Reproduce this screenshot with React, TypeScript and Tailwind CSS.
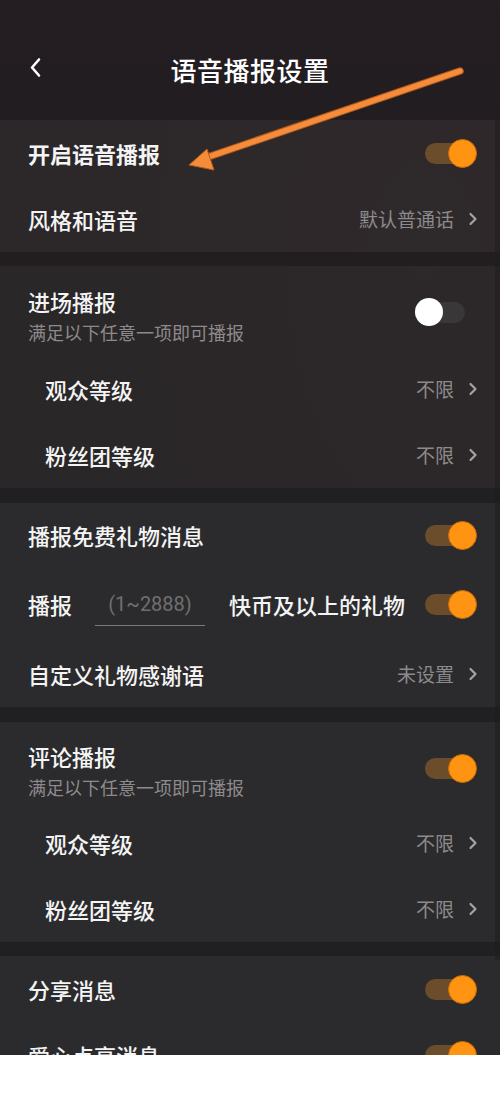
import React from "react";

const FONT = { fontFamily: '"Noto Sans CJK SC", "Noto Sans", sans-serif' };

function Toggle({ on }: { on: boolean }) {
  if (on) {
    return (
      <div className="relative w-[52px] h-[28px] flex items-center shrink-0">
        <div className="absolute left-0 right-[4px] h-[21px] rounded-full bg-[#6b4c2b]" />
        <div className="absolute right-0 w-[29px] h-[29px] rounded-full bg-[#ff9412] border border-[#c76a08]" />
      </div>
    );
  }
  return (
    <div className="relative w-[52px] h-[28px] flex items-center shrink-0 mr-[10px]">
      <div className="absolute left-[6px] right-[2px] h-[21px] rounded-full bg-[#3a3739]" />
      <div className="absolute left-0 w-[28px] h-[28px] rounded-full bg-white" />
    </div>
  );
}

function Chevron() {
  return (
    <svg width="10" height="14" viewBox="0 0 10 14" className="ml-[14px]">
      <path d="M2.5 2 L7.5 7 L2.5 12" fill="none" stroke="#a3a3a3" strokeWidth="2.2" strokeLinecap="round" strokeLinejoin="round" />
    </svg>
  );
}

function ValueRow({ label, value, indent, h = 66, bold }: { label: string; value: string; indent?: boolean; h?: number; bold?: boolean }) {
  return (
    <div className={`flex items-center justify-between pr-[22px] ${indent ? "pl-[45px]" : "pl-[28px]"}`} style={{ height: h }}>
      <span className={`text-[22px] text-[#f4f4f4] ${bold ? "font-bold" : "font-medium"}`}>{label}</span>
      <div className="flex items-center">
        <span className="text-[19px] text-[#8c8a8b]">{value}</span>
        <Chevron />
      </div>
    </div>
  );
}

function ToggleRow({ label, on, h = 66, bold }: { label: string; on: boolean; h?: number; bold?: boolean }) {
  return (
    <div className="flex items-center justify-between pl-[28px] pr-[23px]" style={{ height: h }}>
      <span className={`text-[22px] text-[#f4f4f4] ${bold ? "font-bold" : "font-medium"}`}>{label}</span>
      <Toggle on={on} />
    </div>
  );
}

function HeaderToggle({ title, on, h, pt, tm }: { title: string; on: boolean; h: number; pt: number; tm: number }) {
  return (
    <div className="flex justify-between pl-[28px] pr-[23px]" style={{ height: h, paddingTop: pt }}>
      <div className="flex flex-col">
        <span className="text-[22px] leading-[32px] font-medium text-[#f4f4f4]">{title}</span>
        <span className="text-[18px] leading-[26px] mt-[2px] text-[#8e8a8c]">满足以下任意一项即可播报</span>
      </div>
      <div style={{ marginTop: tm }}>
        <Toggle on={on} />
      </div>
    </div>
  );
}

export default function App() {
  return (
    <div className="w-[500px] h-[1111px] bg-white relative overflow-hidden" style={FONT}>
      <div className="h-[1055px] overflow-hidden bg-[#201e20] relative">
        {/* reddish tint */}
        <div className="absolute inset-0 bg-[radial-gradient(ellipse_at_85%_25%,rgba(120,65,65,0.32),transparent_60%)] pointer-events-none" />
        <div className="relative">
          {/* header */}
          <div className="h-[120px] bg-gradient-to-b from-[#241e22] to-[#221d21] relative flex items-center justify-center pt-[18px]">
            <svg width="14" height="22" viewBox="0 0 14 22" className="absolute left-[29px] top-[57px]">
              <path d="M10 2.5 L3 10.5 L10 18.5" fill="none" stroke="#ffffff" strokeWidth="2.6" strokeLinecap="round" strokeLinejoin="round" />
            </svg>
            <span className="text-[26px] font-medium text-white tracking-[0.5px]">语音播报设置</span>
          </div>

          {/* section 1 */}
          <div className="bg-[#2e292b]/90">
            <ToggleRow label="开启语音播报" on bold />
            <ValueRow label="风格和语音" value="默认普通话" />
          </div>
          <div className="h-[14px] bg-[#221e20]" />

          {/* section 2 */}
          <div className="bg-[#2b2829]/90">
            <HeaderToggle title="进场播报" on={false} h={90} pt={19} tm={13} />
            <ValueRow label="观众等级" value="不限" indent />
            <ValueRow label="粉丝团等级" value="不限" indent />
          </div>
          <div className="h-[15px] bg-[#202022]" />

          {/* section 3 */}
          <div className="bg-[#2b2b2d]">
            <ToggleRow label="播报免费礼物消息" on h={64} />
            <div className="flex items-center pl-[28px] pr-[23px] h-[74px]">
              <span className="text-[22px] font-medium text-[#f4f4f4] w-[67px]">播报</span>
              <div className="w-[110px] h-[44px] border-b border-[#7a7a7a] flex items-center justify-center mr-[24px]">
                <span className="text-[20px] text-[#6f6f71]" style={{ fontFamily: 'Roboto, "Noto Sans", sans-serif' }}>(1~2888)</span>
              </div>
              <span className="text-[22px] font-medium text-[#f4f4f4] flex-1">快币及以上的礼物</span>
              <Toggle on />
            </div>
            <ValueRow label="自定义礼物感谢语" value="未设置" h={66} />
          </div>
          <div className="h-[15px] bg-[#202022]" />

          {/* section 4 */}
          <div className="bg-[#2b2b2d]">
            <HeaderToggle title="评论播报" on h={88} pt={18} tm={14} />
            <ValueRow label="观众等级" value="不限" indent />
            <ValueRow label="粉丝团等级" value="不限" indent />
          </div>
          <div className="h-[14px] bg-[#202022]" />

          {/* section 5 */}
          <div className="bg-[#2b2b2d]">
            <ToggleRow label="分享消息" on />
            <ToggleRow label="爱心点亮消息" on />
          </div>
        </div>

        {/* right edge strip */}
        <div className="absolute right-0 top-[105px] w-[5px] h-[855px] bg-[#1f1d1f]/60" />

        {/* annotation arrow */}
        <svg width="500" height="200" viewBox="0 0 500 200" className="absolute left-0 top-0 pointer-events-none">
          <line x1="460" y1="71" x2="205" y2="158" stroke="#b55a1a" strokeWidth="7.5" strokeLinecap="round" />
          <line x1="460" y1="71" x2="205" y2="158" stroke="#f58c3c" strokeWidth="5.5" strokeLinecap="round" />
          <polygon points="189,165 207,149 214,170" fill="#f58c3c" stroke="#b55a1a" strokeWidth="1" strokeLinejoin="round" />
        </svg>
      </div>
    </div>
  );
}
